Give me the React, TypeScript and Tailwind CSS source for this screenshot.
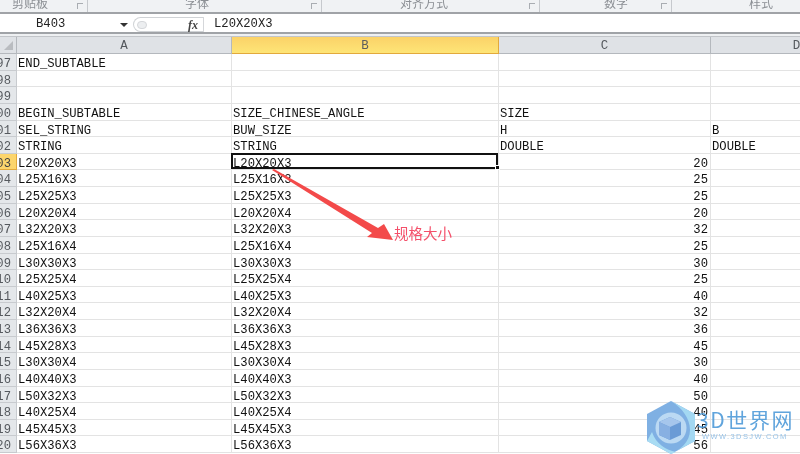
const mono = "font-['Liberation_Mono',monospace]";

const rows: [string, string, string, string, string][] = [
  ["397", "END_SUBTABLE", "", "", ""],
  ["398", "", "", "", ""],
  ["399", "", "", "", ""],
  ["400", "BEGIN_SUBTABLE", "SIZE_CHINESE_ANGLE", "SIZE", ""],
  ["401", "SEL_STRING", "BUW_SIZE", "H", "B"],
  ["402", "STRING", "STRING", "DOUBLE", "DOUBLE"],
  ["403", "L20X20X3", "L20X20X3", "20", ""],
  ["404", "L25X16X3", "L25X16X3", "25", ""],
  ["405", "L25X25X3", "L25X25X3", "25", ""],
  ["406", "L20X20X4", "L20X20X4", "20", ""],
  ["407", "L32X20X3", "L32X20X3", "32", ""],
  ["408", "L25X16X4", "L25X16X4", "25", ""],
  ["409", "L30X30X3", "L30X30X3", "30", ""],
  ["410", "L25X25X4", "L25X25X4", "25", ""],
  ["411", "L40X25X3", "L40X25X3", "40", ""],
  ["412", "L32X20X4", "L32X20X4", "32", ""],
  ["413", "L36X36X3", "L36X36X3", "36", ""],
  ["414", "L45X28X3", "L45X28X3", "45", ""],
  ["415", "L30X30X4", "L30X30X4", "30", ""],
  ["416", "L40X40X3", "L40X40X3", "40", ""],
  ["417", "L50X32X3", "L50X32X3", "50", ""],
  ["418", "L40X25X4", "L40X25X4", "40", ""],
  ["419", "L45X45X3", "L45X45X3", "45", ""],
  ["420", "L56X36X3", "L56X36X3", "56", ""],
];

const gridCols = "grid grid-cols-[17px_215px_267px_212px_172px]";

function RibbonGroup({ label, width, pad }: { label: string; width: string; pad: string }) {
  return (
    <div className={`${width} ${pad} relative flex h-full shrink-0 items-end justify-start overflow-hidden border-r border-[#c6c9cd]`}>
      <span className="mb-[2px] whitespace-nowrap text-[12px] leading-[14px] text-[#8b8f94]">{label}</span>
      <span className="absolute bottom-[3px] right-[4px] h-[6px] w-[6px] border-l border-t border-[#a9adb2]" />
    </div>
  );
}

function ColHead({ label, active }: { label: string; active?: boolean }) {
  return (
    <div
      className={`flex items-center justify-center overflow-hidden border-b border-r pt-[2px] text-[12.5px] leading-[14px] ${
        active
          ? "border-[#e2a93c] bg-gradient-to-b from-[#fbd268] to-[#fee577] text-[#5d5d5d]"
          : "border-[#b4b8bd] bg-[#dfe2e6] text-[#55595e]"
      }`}
    >
      {label}
    </div>
  );
}

export default function App() {
  return (
    <div className={`relative h-[454px] w-[800px] overflow-hidden bg-white ${mono} blur-[0.4px]`}>
      {/* Ribbon bottom edge */}
      <div className="flex h-[14px] border-b-2 border-[#a0a3a7] bg-[#f0f2f4] font-['Noto_Sans_CJK_SC',sans-serif]">
        <RibbonGroup label="剪贴板" width="w-[88px]" pad="pl-[12px]" />
        <RibbonGroup label="字体" width="w-[234px]" pad="pl-[97px]" />
        <RibbonGroup label="对齐方式" width="w-[218px]" pad="pl-[78px]" />
        <RibbonGroup label="数字" width="w-[132px]" pad="pl-[64px]" />
        <div className="flex flex-1 items-end overflow-hidden pl-[77px]">
          <span className="mb-[2px] whitespace-nowrap text-[12px] leading-[14px] text-[#8b8f94]">样式</span>
        </div>
      </div>

      {/* Formula bar */}
      <div className="flex h-[20px] items-center border-b-2 border-[#a0a3a7] pt-[3px] text-[12.2px] text-[#222]">
        <div className="w-[120px] shrink-0 pl-[36px]">B403</div>
        <div className="h-0 w-0 shrink-0 border-x-[4px] border-t-[4px] border-x-transparent border-t-[#333]" />
        <div className="ml-[5px] flex h-[15px] w-[70px] shrink-0 items-center rounded-l-full border-y border-l border-[#d0d3d6] pl-[3px]">
          <div className="h-[8px] w-[10px] rounded-full border border-[#d5d7da] bg-[#eceef0]" />
          <span className="ml-auto mr-[5px] font-['Liberation_Serif',serif] text-[12px] font-bold italic text-[#444]">
            fx
          </span>
        </div>
        <div className="h-full w-px shrink-0 bg-[#d5d7da]" />
        <div className="pl-[10px]">L20X20X3</div>
      </div>

      <div className="h-[3px] border-b border-[#c2c5c9] bg-[#eef0f2]" />

      {/* Sheet */}
      <div className={`${gridCols} h-[17px] grid-rows-[17px] text-center`}>
        <div className="relative border-b border-r border-[#b4b8bd] bg-[#dfe2e6]">
          <span className="absolute bottom-[3px] right-[3px] h-0 w-0 border-b-[9px] border-l-[9px] border-b-[#b9bcc0] border-l-transparent" />
        </div>
        <ColHead label="A" />
        <ColHead label="B" active />
        <ColHead label="C" />
        <ColHead label="D" />
      </div>

      <div className="grid auto-rows-[16.625px] text-[12.2px] leading-[13px] text-[#111]">
        {rows.map(([num, a, b, c, d]) => {
          const selected = num === "403";
          const numeric = /^\d+$/.test(c);
          return (
            <div key={num} className={`${gridCols} grid-rows-[16.625px]`}>
              <div
                className={`flex justify-end overflow-hidden whitespace-nowrap border-b border-r pr-[5px] pt-[4px] ${
                  selected
                    ? "border-[#e2a93c] bg-[#fcd56c] text-[#444]"
                    : "border-[#c8cbcf] bg-[#e4e7ea] text-[#55595e]"
                }`}
              >
                {num}
              </div>
              <div className="overflow-hidden whitespace-nowrap border-b border-r border-[#e3e3e3] pl-[1px] pt-[4px]">{a}</div>
              <div className="relative whitespace-nowrap border-b border-r border-[#e3e3e3] pl-[1px] pt-[4px]">
                {b}
                {selected && (
                  <>
                    <span className="absolute -left-[1px] -top-[1px] bottom-0 right-0 border-2 border-[#111]" />
                    <span className="absolute -bottom-[1px] -right-[2px] h-[5px] w-[5px] border border-white bg-[#111]" />
                  </>
                )}
              </div>
              <div
                className={`overflow-hidden whitespace-nowrap border-b border-r border-[#e3e3e3] pt-[4px] ${
                  numeric ? "pr-[2px] text-right" : "pl-[1px]"
                }`}
              >
                {c}
              </div>
              <div className="overflow-hidden whitespace-nowrap border-b border-[#e3e3e3] pl-[1px] pt-[4px]">{d}</div>
            </div>
          );
        })}
      </div>

      {/* Annotation arrow */}
      <svg className="absolute left-0 top-0" width="800" height="454" viewBox="0 0 800 454" fill="none">
        <polygon points="272,170 274,169 378,228 384,224 393,240 367,237 372,233" fill="#f34a4a" />
      </svg>
      <span className="absolute left-[394px] top-[223px] font-['Noto_Sans_CJK_SC',sans-serif] text-[14.5px] leading-[20px] text-[#f4506a]">
        规格大小
      </span>

      {/* Watermark */}
      <svg className="absolute left-[646px] top-[400px]" width="50" height="54" viewBox="0 0 50 54" fill="none">
        <polygon points="25,1 49,14 49,41 25,54 1,41 1,14" fill="#7fb0e3" />
        <path d="M25 1 L49 14 L49 41 L25 54 C34 50 44 42 44 30 C44 18 36 8 25 1Z" fill="#a3d8f2" />
        <path d="M1 41 L25 54 L30 52 C20 50 10 44 6 32Z" fill="#a9dcf3" />
        <circle cx="25" cy="28" r="15.5" fill="#c6e0f6" opacity="0.85" />
        <polygon points="24,17 35,22 35,35 24,40 13,35 13,22" fill="#6a9bd6" />
        <polygon points="24,17 35,22 24,27 13,22" fill="#a6c6ec" />
        <polygon points="13,22 24,27 24,40 13,35" fill="#88b0e2" />
      </svg>
      <div className="absolute left-[697px] top-[406px] flex flex-col font-['Noto_Sans_CJK_SC',sans-serif] opacity-90">
        <span className="whitespace-nowrap text-[21px] font-normal leading-[26px] tracking-[1.6px] text-[#4f9bd9]">3D世界网</span>
        <span className="ml-[5px] whitespace-nowrap font-['Liberation_Sans',sans-serif] text-[7.5px] leading-[9px] tracking-[1.4px] text-[#8dbde6]">
          WWW.3DSJW.COM
        </span>
      </div>
    </div>
  );
}
